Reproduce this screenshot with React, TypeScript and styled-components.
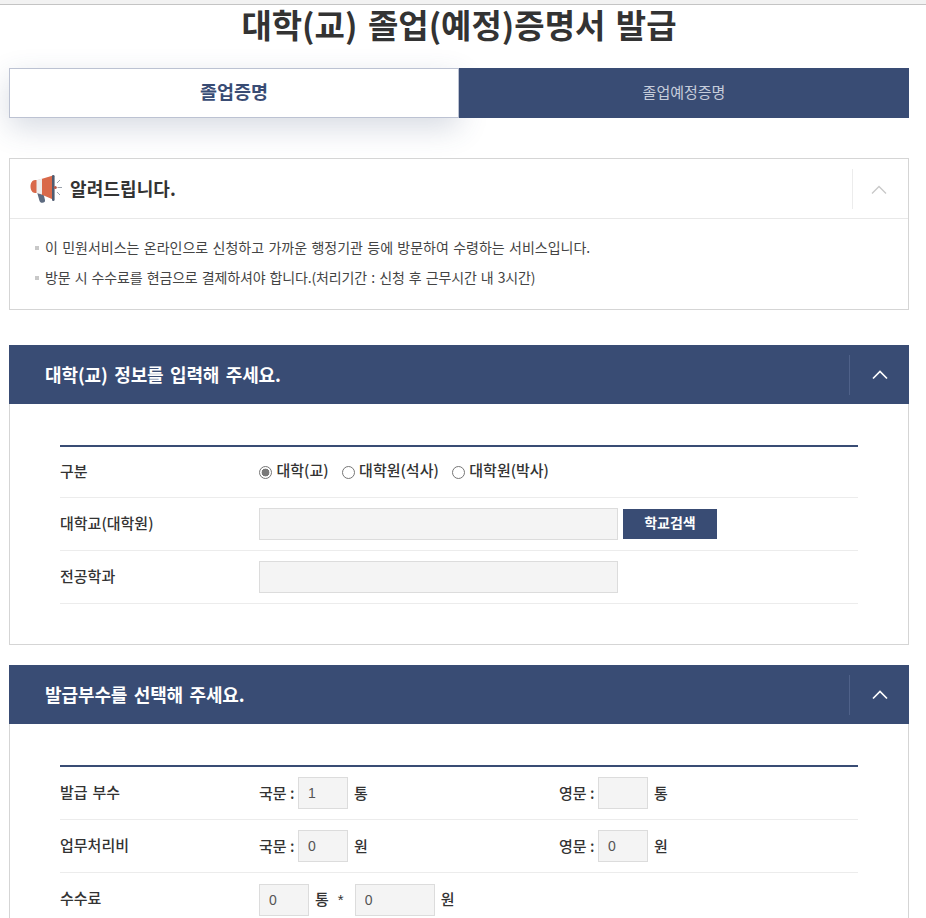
import { createGlobalStyle, styled } from "styled-components";

const NAVY = "#394c74";
const FONT = `"Noto Sans CJK KR", "Noto Sans", sans-serif`;

const GlobalStyle = createGlobalStyle`
  html, body { margin: 0; padding: 0; background: #fff; }
  body { font-family: ${FONT}; color: #333; overflow: hidden; height: 918px; }
`;

const Page = styled.div`
  width: 926px;
  height: 918px;
  overflow: hidden;
  box-sizing: border-box;
`;

const TopStrip = styled.div`
  height: 4px;
  background: #f2f2f2;
  border-bottom: 1px solid #c4c4c4;
`;

const Title = styled.h1`
  margin: 0;
  height: 63px;
  padding: 0 17px 0 9px;
  text-align: center;
  font-size: 33px;
  line-height: 38px;
  font-weight: 700;
  color: #333;
  word-spacing: 3px;
`;

const Content = styled.div`
  padding: 0 17px 0 9px;
`;

const Tabs = styled.div`
  display: flex;
  height: 50px;
  margin-bottom: 40px;
`;

const Tab = styled.div<{ $active?: boolean }>`
  flex: 0 0 50%;
  display: flex;
  align-items: center;
  justify-content: center;
  box-sizing: border-box;
  padding-bottom: 4px;
  font-size: ${(p) => (p.$active ? "18.5px" : "15px")};
  font-weight: ${(p) => (p.$active ? 700 : 400)};
  color: ${(p) => (p.$active ? NAVY : "#c6cddb")};
  background: ${(p) => (p.$active ? "#fff" : NAVY)};
  border: ${(p) => (p.$active ? "1px solid #bcc2d2" : "none")};
  box-shadow: ${(p) => (p.$active ? "0 10px 30px rgba(57, 76, 116, 0.2)" : "none")};
`;

const NoticeBox = styled.section`
  height: 152px;
  box-sizing: border-box;
  border: 1px solid #d5d5d5;
  margin-bottom: 35px;
`;

const NoticeHead = styled.div`
  height: 59px;
  display: flex;
  align-items: center;
  padding-left: 20px;
  border-bottom: 1px solid #e8e8e8;
`;

const NoticeTitle = styled.h2`
  margin: 0 0 0 8px;
  padding-bottom: 2px;
  flex: 1;
  font-size: 18px;
  font-weight: 700;
  color: #333;
  letter-spacing: 0.1px;
`;

const Toggle = styled.div<{ $light?: boolean }>`
  width: ${(p) => (p.$light ? "60px" : "56px")};
  height: 40px;
  flex: none;
  display: flex;
  align-items: center;
  justify-content: center;
  box-sizing: border-box;
  padding: ${(p) => (p.$light ? "0" : "2px 4px 0 0")};
  border-left: 1px solid ${(p) => (p.$light ? "#4f6189" : "#ececec")};
`;

const NoticeList = styled.ul`
  list-style: none;
  margin: 0;
  padding: 13px 0 0 25px;
`;

const NoticeItem = styled.li<{ $tight?: boolean }>`
  position: relative;
  padding-left: 10px;
  height: 30px;
  font-size: 14px;
  line-height: 30px;
  color: #444;
  word-spacing: 1.2px;
  letter-spacing: ${(p) => (p.$tight ? "-0.15px" : "0")};
  &::before {
    content: "";
    position: absolute;
    left: 0;
    top: 14px;
    width: 4px;
    height: 4px;
    background: #c8c8c8;
  }
`;

const SectionHead = styled.div`
  height: 59px;
  background: ${NAVY};
  display: flex;
  align-items: center;
  padding-left: 36px;
`;

const SectionTitle = styled.h2`
  margin: 0;
  padding-bottom: 2px;
  flex: 1;
  font-size: 18px;
  font-weight: 700;
  color: #fff;
  letter-spacing: -0.1px;
  word-spacing: 2.4px;
`;

const SectionBody = styled.div<{ $last?: boolean }>`
  box-sizing: border-box;
  height: ${(p) => (p.$last ? "260px" : "241px")};
  margin-bottom: 20px;
  padding: 41px 50px 0;
  border: 1px solid #d5d5d5;
  border-top: none;
`;

const FormTable = styled.div`
  border-top: 2px solid ${NAVY};
`;

const Row = styled.div<{ $h?: number; $plain?: boolean }>`
  display: flex;
  align-items: center;
  height: ${(p) => p.$h ?? 53}px;
  box-sizing: border-box;
  border-bottom: ${(p) => (p.$plain ? "none" : "1px solid #ececec")};
`;

const Label = styled.div`
  width: 199px;
  flex: none;
  padding-bottom: 4px;
  font-size: 15px;
  font-weight: 500;
  color: #333;
  word-spacing: 1.5px;
`;

const Cell = styled.div<{ $w?: number }>`
  display: flex;
  align-items: center;
  ${(p) => (p.$w ? `width: ${p.$w}px; flex: none;` : "")}
  font-size: 15px;
  font-weight: 500;
  color: #333;
`;

const RadioLabel = styled.label`
  display: flex;
  align-items: center;
  margin-right: 13px;
`;

const RadioText = styled.span`
  padding-bottom: 5px;
`;

const Radio = styled.input.attrs({ type: "radio" })`
  appearance: none;
  width: 13px;
  height: 13px;
  margin: 0 4.5px 0 0;
  border: 1px solid #767676;
  border-radius: 50%;
  background: #fff;
  box-sizing: border-box;
  &:checked {
    background: radial-gradient(circle, #7a7a7a 0 3.6px, #fff 4.2px);
  }
`;

const Field = styled.input<{ $w: number; $gap?: number }>`
  width: ${(p) => p.$w}px;
  height: 32px;
  margin-left: ${(p) => p.$gap ?? 0}px;
  box-sizing: border-box;
  border: 1px solid #dcdcdc;
  background: #f4f4f4;
  padding: 0 9px;
  font-family: "Liberation Sans", Arial, sans-serif;
  font-size: 14px;
  color: #555;
  outline: none;
`;

const SearchButton = styled.button`
  width: 94px;
  height: 30px;
  margin-left: 5px;
  border: none;
  background: ${NAVY};
  color: #fff;
  font-family: ${FONT};
  font-size: 14px;
  font-weight: 700;
  padding: 0 0 4px;
`;

const Prefix = styled.span`
  width: 39px;
  flex: none;
  white-space: nowrap;
  padding-bottom: 2px;
`;

const Unit = styled.span`
  margin-left: 6px;
  padding-bottom: 2px;
`;

const Star = styled.span`
  margin-left: 9px;
  font-family: "Liberation Sans", Arial, sans-serif;
  font-size: 15px;
`;

const Chevron = ({ color, weight }: { color: string; weight: number }) => (
  <svg width="16" height="10" viewBox="0 0 16 10" fill="none">
    <path d="M1 8.5 8 1.500l7 7" stroke={color} strokeWidth={weight} />
  </svg>
);

const Megaphone = () => (
  <svg width="32" height="28" viewBox="0 0 32 28">
    <path d="M7 17h6l2 8c.4 1.800-.8 2.800-2.600 2.800-1.600 0-2.600-.8-3-2.400z" fill="#5d6b80" />
    <path d="M5 5h3l15-4.500v24L8 18H5c-2.500 0-4.500-2.900-4.500-6.500S2.500 5 5 5z" fill="#d9694a" />
    <path d="M6.500 5 12 3.600v16L6.500 18z" fill="#eeeeee" />
    <rect x="22" y="0" width="2.600" height="26" rx="1.300" fill="#4f5b70" />
    <circle cx="25.300" cy="12.500" r="1.500" fill="#b7594a" />
    <path d="M27.500 12.500h4.500M27 8l3-3M27 17l3 3" stroke="#9aa2ad" strokeWidth="1" />
  </svg>
);

export default function App() {
  return (
    <Page>
      <GlobalStyle />
      <TopStrip />
      <Title>대학(교) 졸업(예정)증명서 발급</Title>
      <Content>
        <Tabs>
          <Tab $active>졸업증명</Tab>
          <Tab>졸업예정증명</Tab>
        </Tabs>

        <NoticeBox>
          <NoticeHead>
            <Megaphone />
            <NoticeTitle>알려드립니다.</NoticeTitle>
            <Toggle>
              <Chevron color="#c8c8c8" weight={1.3} />
            </Toggle>
          </NoticeHead>
          <NoticeList>
            <NoticeItem>이 민원서비스는 온라인으로 신청하고 가까운 행정기관 등에 방문하여 수령하는 서비스입니다.</NoticeItem>
            <NoticeItem $tight>방문 시 수수료를 현금으로 결제하셔야 합니다.(처리기간 : 신청 후 근무시간 내 3시간)</NoticeItem>
          </NoticeList>
        </NoticeBox>

        <SectionHead>
          <SectionTitle>대학(교) 정보를 입력해 주세요.</SectionTitle>
          <Toggle $light>
            <Chevron color="#fff" weight={1.7} />
          </Toggle>
        </SectionHead>
        <SectionBody>
          <FormTable>
            <Row $h={51}>
              <Label>구분</Label>
              <Cell>
                <RadioLabel>
                  <Radio name="kind" defaultChecked />
                  <RadioText>대학(교)</RadioText>
                </RadioLabel>
                <RadioLabel>
                  <Radio name="kind" />
                  <RadioText>대학원(석사)</RadioText>
                </RadioLabel>
                <RadioLabel>
                  <Radio name="kind" />
                  <RadioText>대학원(박사)</RadioText>
                </RadioLabel>
              </Cell>
            </Row>
            <Row>
              <Label>대학교(대학원)</Label>
              <Cell>
                <Field $w={359} readOnly />
                <SearchButton>학교검색</SearchButton>
              </Cell>
            </Row>
            <Row>
              <Label>전공학과</Label>
              <Cell>
                <Field $w={359} readOnly />
              </Cell>
            </Row>
          </FormTable>
        </SectionBody>

        <SectionHead>
          <SectionTitle>발급부수를 선택해 주세요.</SectionTitle>
          <Toggle $light>
            <Chevron color="#fff" weight={1.7} />
          </Toggle>
        </SectionHead>
        <SectionBody $last>
          <FormTable>
            <Row>
              <Label>발급 부수</Label>
              <Cell $w={300}>
                <Prefix>국문 :</Prefix>
                <Field $w={50} defaultValue="1" />
                <Unit>통</Unit>
              </Cell>
              <Cell>
                <Prefix>영문 :</Prefix>
                <Field $w={50} />
                <Unit>통</Unit>
              </Cell>
            </Row>
            <Row>
              <Label>업무처리비</Label>
              <Cell $w={300}>
                <Prefix>국문 :</Prefix>
                <Field $w={50} defaultValue="0" />
                <Unit>원</Unit>
              </Cell>
              <Cell>
                <Prefix>영문 :</Prefix>
                <Field $w={50} defaultValue="0" />
                <Unit>원</Unit>
              </Cell>
            </Row>
            <Row $plain>
              <Label>수수료</Label>
              <Cell>
                <Field $w={50} defaultValue="0" />
                <Unit>통</Unit>
                <Star>*</Star>
                <Field $w={80} $gap={11} defaultValue="0" />
                <Unit>원</Unit>
              </Cell>
            </Row>
          </FormTable>
        </SectionBody>
      </Content>
    </Page>
  );
}
